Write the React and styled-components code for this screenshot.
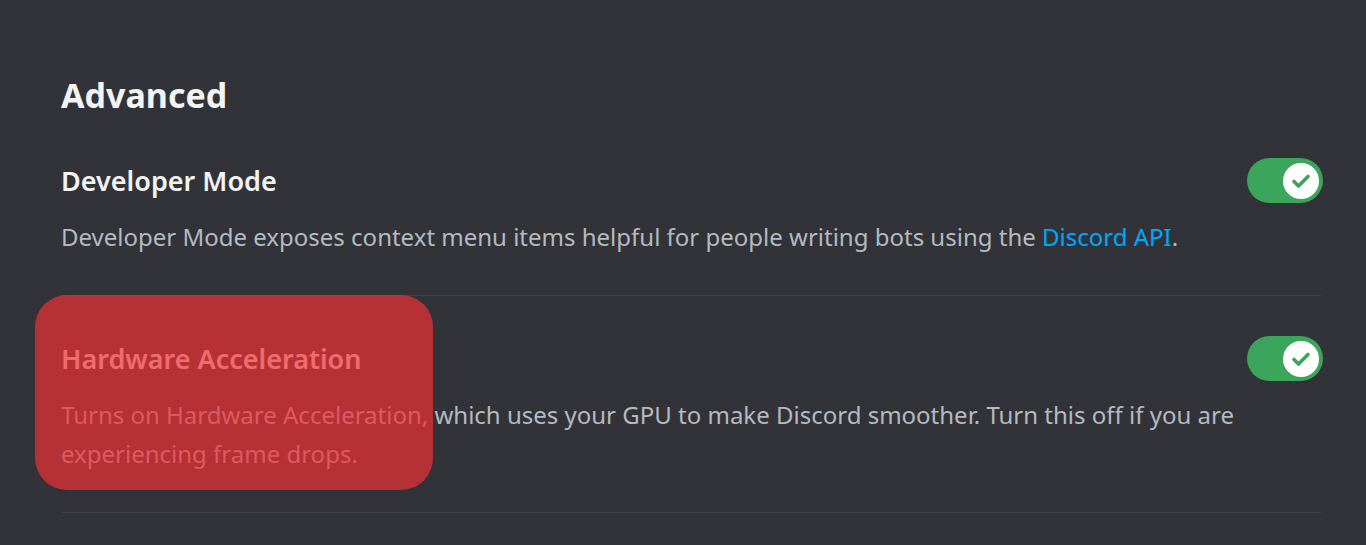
import styled, { createGlobalStyle } from 'styled-components'

const GlobalStyle = createGlobalStyle`
  body {
    margin: 0;
    background: #313338;
    font-family: 'Noto Sans', 'Open Sans', sans-serif;
  }
`

function Toggle({ on }) {
  return (
    <Switch on={on}>
      <Knob>
        <svg width="24" height="24" viewBox="0 0 24 24" fill="none">
          <path d="M5 12.5l4.5 4.5L19 7.5" stroke="#3ba55c" strokeWidth="3.6" strokeLinecap="round" strokeLinejoin="round" />
        </svg>
      </Knob>
    </Switch>
  )
}

function Setting({ title, children, highlighted }) {
  return (
    <Item>
      {highlighted && <Highlight />}
      <TitleRow>
        <Title>{title}</Title>
        <Toggle on />
      </TitleRow>
      <Note>{children}</Note>
      <Divider />
    </Item>
  )
}

export default function App() {
  return (
    <Page>
      <GlobalStyle />
      <Heading>Advanced</Heading>
      <Setting title="Developer Mode">
        Developer Mode exposes context menu items helpful for people writing bots using the <Link>Discord API</Link>.
      </Setting>
      <Setting title="Hardware Acceleration" highlighted>
        Turns on Hardware Acceleration, which uses your GPU to make Discord smoother. Turn this off if you are experiencing frame drops.
      </Setting>
    </Page>
  )
}

const Page = styled.div`
  display: flex;
  flex-direction: column;
  padding: 75px 45px 0 61px;
  height: 545px;
  box-sizing: border-box;
  overflow: hidden;
`

const Heading = styled.h2`
  margin: 0 0 43px;
  font-size: 34px;
  line-height: 40px;
  font-weight: 700;
  color: #f2f3f5;
`

const Item = styled.div`
  position: relative;
  display: flex;
  flex-direction: column;
`

const TitleRow = styled.div`
  display: flex;
  align-items: center;
  justify-content: space-between;
`

const Title = styled.div`
  font-size: 27px;
  font-weight: 600;
  color: #f2f3f5;
`

const Note = styled.div`
  margin-top: 14px;
  font-size: 24px;
  line-height: 39px;
  color: #b5bac1;
`

const Link = styled.span`
  color: #00a8fc;
`

const Divider = styled.div`
  height: 1px;
  background: #3f4147;
  margin: 39px 0 40px;
`

const Switch = styled.div`
  width: 76px;
  height: 45px;
  margin-right: -2px;
  border-radius: 23px;
  background: ${p => (p.on ? '#3ba55c' : '#80848e')};
  display: flex;
  align-items: center;
  justify-content: ${p => (p.on ? 'flex-end' : 'flex-start')};
  padding: 0 4px;
  box-sizing: border-box;
`

const Knob = styled.div`
  width: 36px;
  height: 36px;
  border-radius: 50%;
  background: #ffffff;
  display: flex;
  align-items: center;
  justify-content: center;
`

const Highlight = styled.div`
  position: absolute;
  top: -41px;
  left: -26px;
  width: 398px;
  height: 195px;
  border-radius: 32px;
  background: rgba(238, 48, 52, 0.7);
  z-index: 1;
`
